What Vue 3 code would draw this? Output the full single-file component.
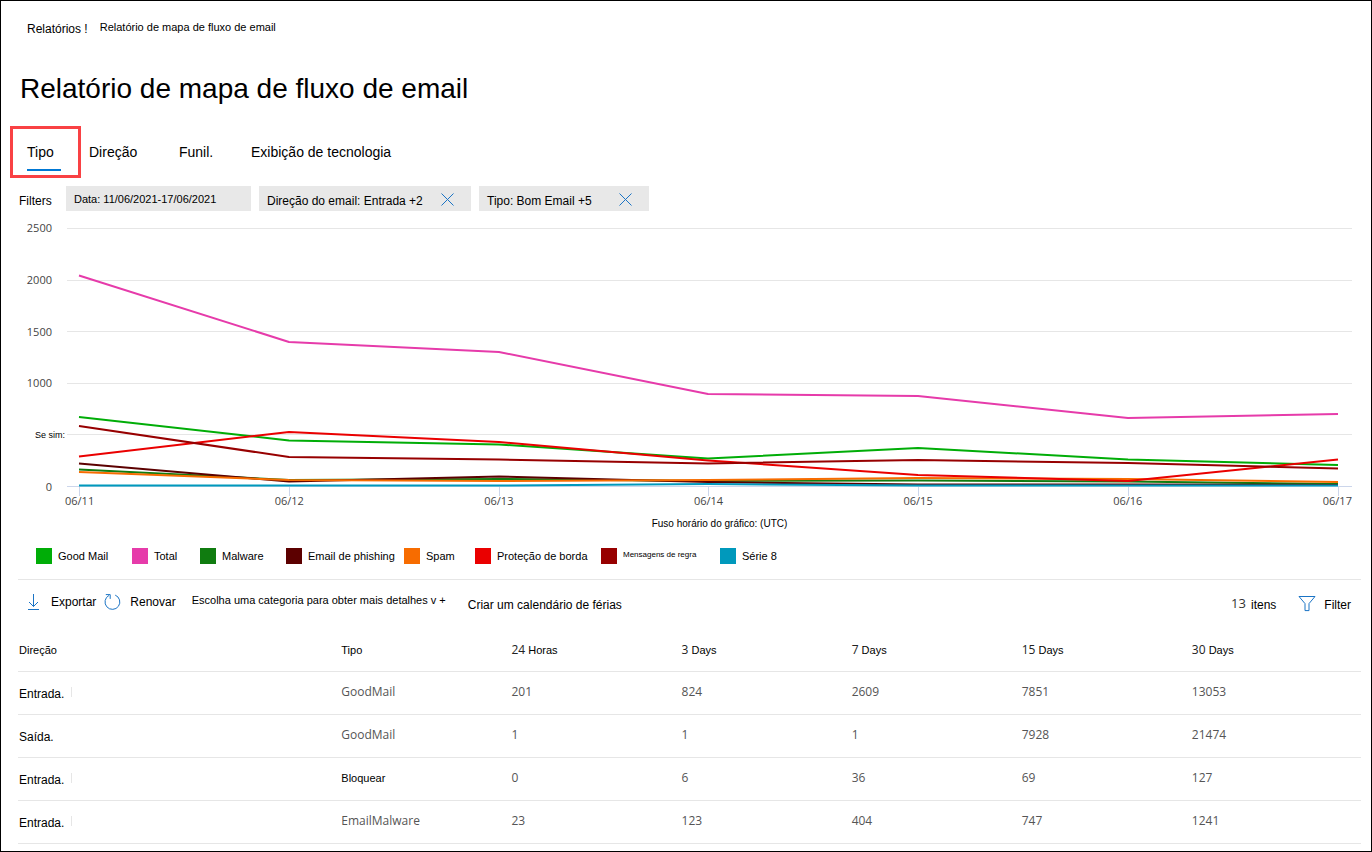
<script setup>
import { ref } from 'vue'

const tabs = ['Tipo', 'Direção', 'Funil.', 'Exibição de tecnologia']
const activeTab = ref('Tipo')

const yLabels = ['2500', '2000', '1500', '1000', 'Se sim:', '0']
const xLabels = ['06/11', '06/12', '06/13', '06/14', '06/15', '06/16', '06/17']

const series = [
  { name: 'Good Mail', color: '#00ad07', values: [673, 446, 407, 271, 373, 262, 208] },
  { name: 'Total', color: '#e63baa', values: [2045, 1400, 1303, 896, 877, 664, 703] },
  { name: 'Malware', color: '#107c10', values: [165, 63, 73, 53, 58, 48, 24] },
  { name: 'Email de phishing', color: '#5c0000', values: [223, 48, 97, 44, 19, 19, 15] },
  { name: 'Spam', color: '#f76c00', values: [141, 63, 53, 63, 82, 73, 44] },
  { name: 'Proteção de borda', color: '#ea0000', values: [291, 528, 431, 252, 111, 53, 262] },
  { name: 'Mensagens de regra', color: '#970000', small: true, values: [586, 286, 262, 223, 257, 228, 174] },
  { name: 'Série 8', color: '#0099bc', values: [10, 10, 10, 24, 10, 10, 10] }
]

const PLOT_WIDTH = 1285
const PLOT_HEIGHT = 258
const MAX_VALUE = 2500

const gridLines = [0, 1, 2, 3, 4].map((n) => Math.round((n * PLOT_HEIGHT) / 5) + 0.5)
const xAt = (i) => 12 + Math.round(i * 209.8)
const yAt = (v) => PLOT_HEIGHT + 0.5 - (v * PLOT_HEIGHT) / MAX_VALUE
const pointsOf = (s) => s.values.map((v, i) => `${xAt(i)},${yAt(v).toFixed(1)}`).join(' ')

const periods = [
  { count: 24, unit: 'Horas' },
  { count: 3, unit: 'Days' },
  { count: 7, unit: 'Days' },
  { count: 15, unit: 'Days' },
  { count: 30, unit: 'Days' }
]

const rows = [
  { direction: 'Entrada.', divider: true, type: 'GoodMail', counts: [201, 824, 2609, 7851, 13053] },
  { direction: 'Saída.', type: 'GoodMail', counts: [1, 1, 1, 7928, 21474] },
  { direction: 'Entrada.', divider: true, type: 'Bloquear', strong: true, counts: [0, 6, 36, 69, 127] },
  { direction: 'Entrada.', divider: true, type: 'EmailMalware', counts: [23, 123, 404, 747, 1241] }
]
</script>

<template>
  <main class="page">
    <nav class="breadcrumb" aria-label="Navegação">
      <a href="#" class="crumb">Relatórios !</a>
      <span class="crumb-current">Relatório de mapa de fluxo de email</span>
    </nav>

    <h1 class="title">Relatório de mapa de fluxo de email</h1>

    <div class="tabs" role="tablist">
      <button
        v-for="tab in tabs"
        :key="tab"
        type="button"
        role="tab"
        class="tab"
        :class="{ active: tab === activeTab }"
        :aria-selected="tab === activeTab"
        @click="activeTab = tab"
      >{{ tab }}</button>
    </div>

    <section class="filters">
      <span class="filters-label">Filters</span>
      <div class="chip"><span class="chip-small">Data: 11/06/2021-17/06/2021</span></div>
      <div class="chip">
        <span>Direção do email: Entrada +2</span>
        <button type="button" class="chip-close" aria-label="Remover filtro de direção">
          <svg width="13" height="13" viewBox="0 0 13 13"><path d="M.5 .5l12 12M12.5 .5l-12 12" /></svg>
        </button>
      </div>
      <div class="chip">
        <span>Tipo: Bom Email +5</span>
        <button type="button" class="chip-close" aria-label="Remover filtro de tipo">
          <svg width="13" height="13" viewBox="0 0 13 13"><path d="M.5 .5l12 12M12.5 .5l-12 12" /></svg>
        </button>
      </div>
    </section>

    <section class="chart">
      <div class="y-axis">
        <span v-for="label in yLabels" :key="label" :class="{ word: label === 'Se sim:' }">{{ label }}</span>
      </div>
      <div class="plot">
        <svg class="plot-svg" :viewBox="`0 0 ${PLOT_WIDTH} 268`" preserveAspectRatio="none" aria-hidden="true">
          <line v-for="y in gridLines" :key="y" class="grid-line" x1="0" :x2="PLOT_WIDTH" :y1="y" :y2="y" />
          <line class="axis-line" x1="0" :x2="PLOT_WIDTH" y1="258.5" y2="258.5" />
          <line v-for="(d, i) in xLabels" :key="d" class="axis-line" :x1="xAt(i) + 0.5" :x2="xAt(i) + 0.5" y1="258" y2="268" />
          <polyline v-for="s in series" :key="s.name" class="series" :points="pointsOf(s)" :stroke="s.color" />
        </svg>
        <div class="x-axis">
          <span v-for="d in xLabels" :key="d">{{ d }}</span>
        </div>
        <p class="timezone">Fuso horário do gráfico: (UTC)</p>
      </div>
    </section>

    <ul class="legend">
      <li v-for="s in series" :key="s.name">
        <span class="swatch" :style="{ background: s.color }"></span>
        <span :class="{ 'legend-small': s.small }">{{ s.name }}</span>
      </li>
    </ul>

    <div class="toolbar">
      <button type="button" class="tool export">
        <svg width="12" height="18" viewBox="0 0 12 18"><path d="M5.5 1v12.500M1 9l4.500 4.500L10 9M0 16.500h11" /></svg>
        <span>Exportar</span>
      </button>
      <button type="button" class="tool refresh">
        <svg width="17" height="18" viewBox="0 0 17 18">
          <path d="M11.2 2.1A7.4 7.4 0 1 1 5 2.4M1.8 1.6h4.4v4.3" />
        </svg>
        <span>Renovar</span>
      </button>
      <button type="button" class="tool category">Escolha uma categoria para obter mais detalhes v +</button>
      <button type="button" class="tool schedule">Criar um calendário de férias</button>
      <div class="toolbar-end">
        <span class="items"><span class="items-count">13</span> <span>itens</span></span>
        <button type="button" class="tool filter">
          <svg width="18" height="17" viewBox="0 0 18 17"><path d="M1 1.5h16L11 8.600v7H7v-7z" /></svg>
          <span>Filter</span>
        </button>
      </div>
    </div>

    <table class="table">
      <thead>
        <tr>
          <th class="first" scope="col">Direção</th>
          <th scope="col">Tipo</th>
          <th v-for="p in periods" :key="p.count" scope="col"><span class="count">{{ p.count }}</span> {{ p.unit }}</th>
        </tr>
      </thead>
      <tbody>
        <tr v-for="(row, i) in rows" :key="i">
          <td class="direction"><span :class="{ divided: row.divider }">{{ row.direction }}</span></td>
          <td :class="{ strong: row.strong }">{{ row.type }}</td>
          <td v-for="(c, j) in row.counts" :key="j">{{ c }}</td>
        </tr>
      </tbody>
    </table>
  </main>
</template>

<style>
body {
  background: #fff;
}
</style>

<style scoped>
.page {
  box-sizing: border-box;
  min-height: 100vh;
  padding: 18px 10px 7px 17px;
  border: 1px solid #000;
  background: #fff;
  color: #000;
  font: 12px/20px "Liberation Sans", Arial, sans-serif;
}

button {
  padding: 0;
  border: 0;
  background: none;
  color: inherit;
  font: inherit;
  text-align: left;
  white-space: nowrap;
  cursor: pointer;
}

svg {
  display: block;
  fill: none;
  stroke: #1b74c5;
}

.breadcrumb {
  display: flex;
  align-items: flex-start;
  gap: 12px;
  padding-left: 9px;
}

.crumb {
  color: inherit;
  text-decoration: none;
}

.crumb-current {
  font-size: 11px;
  line-height: 16px;
}

.title {
  margin: 32px 0 35px;
  padding-left: 2px;
  font-size: 28px;
  font-weight: 400;
  line-height: 36px;
}

.tabs {
  display: grid;
  grid-template-columns: 62px 90px 72px auto;
  justify-content: start;
  padding-left: 9px;
  font-size: 14px;
}

.tab {
  position: relative;
  justify-self: start;
  min-width: 34px;
  height: 29px;
  padding-bottom: 7px;
  border-bottom: 2px solid transparent;
}

.tab.active {
  border-color: #0078d4;
}

.tab.active::after {
  content: "";
  position: absolute;
  top: -16px;
  left: -17px;
  box-sizing: border-box;
  width: 71px;
  height: 52px;
  border: 3px solid #f94144;
}

.filters {
  display: grid;
  grid-template-columns: 40px 185px 212px 170px;
  gap: 8px;
  margin-top: 15px;
}

.filters-label {
  padding: 5px 0 0 1px;
}

.chip {
  display: flex;
  align-items: flex-start;
  justify-content: space-between;
  box-sizing: border-box;
  height: 25px;
  padding: 5px 17px 0 8px;
  background: #e8e8e8;
  white-space: nowrap;
}

.chip-small {
  font-size: 11px;
  line-height: 16px;
}

.chip-close {
  padding-top: 2px;
}

.chip-close path {
  stroke: #1b74c5;
}

.chart {
  display: grid;
  grid-template-columns: 49px 1fr;
  align-items: start;
  margin-top: 9px;
  padding-right: 9px;
}

.y-axis {
  display: flex;
  flex-direction: column;
  justify-content: space-between;
  align-items: flex-end;
  height: 275px;
}

.y-axis span {
  padding-right: 15px;
  color: #444;
  font: 11px/16px "Open Sans", "Noto Sans", sans-serif;
}

.y-axis .word {
  padding-right: 2px;
  color: #000;
  font: 9px/16px "Liberation Sans", Arial, sans-serif;
}

.plot {
  padding-top: 8px;
}

.plot-svg {
  width: 100%;
  height: 268px;
}

.grid-line {
  stroke: #e6e6e6;
  shape-rendering: crispEdges;
}

.axis-line {
  stroke: #ccd6eb;
  shape-rendering: crispEdges;
}

.series {
  stroke-width: 2;
  stroke-linejoin: round;
  vector-effect: non-scaling-stroke;
}

.x-axis {
  display: flex;
  justify-content: space-between;
  margin: -3px 0 0 -2px;
  color: #444;
  font: 11px/16px "Open Sans", "Noto Sans", sans-serif;
}

.timezone {
  margin: 7px 0 0;
  padding-left: 20px;
  font-size: 10px;
  line-height: 16px;
  text-align: center;
}

.legend {
  display: grid;
  grid-template-columns: 96px 68px 86px 118px 71px 126px 119px auto;
  justify-content: start;
  margin: 16px 0 0;
  padding: 0 0 15px 18px;
  border-bottom: 1px solid #e6e6e6;
  font-size: 11px;
  line-height: 16px;
  list-style: none;
  white-space: nowrap;
}

.legend li {
  display: flex;
  gap: 6px;
}

.swatch {
  width: 16px;
  height: 16px;
}

.legend-small {
  font-size: 8px;
  line-height: 14px;
}

.toolbar {
  display: flex;
  align-items: flex-start;
  height: 23px;
  padding: 12px 10px 14px;
}

.tool {
  display: flex;
}

.export {
  gap: 11px;
}

.export svg,
.refresh svg {
  padding-top: 1px;
}

.refresh {
  gap: 9px;
  margin-left: 8px;
}

.category {
  margin-left: 16px;
  font-size: 11px;
  line-height: 16px;
}

.schedule {
  align-self: flex-end;
  margin-left: 22px;
}

.toolbar-end {
  display: flex;
  align-items: flex-end;
  align-self: flex-end;
  gap: 22px;
  margin-left: auto;
}

.items {
  display: flex;
  align-items: flex-start;
  gap: 5px;
}

.items-count {
  color: #333;
  font: 13px/16px "Open Sans", "Noto Sans", sans-serif;
}

.filter {
  gap: 8px;
}

.table {
  width: 100%;
  border-collapse: separate;
  border-spacing: 0;
  table-layout: fixed;
}

.table th,
.table td {
  box-sizing: border-box;
  height: 43px;
  padding: 0 0 0 1px;
  border-bottom: 1px solid #e6e6e6;
  font-weight: 400;
  text-align: left;
  vertical-align: middle;
}

.table th {
  font-size: 11px;
}

.table .first {
  width: 24%;
}

.count {
  color: #222;
  font: 12px/20px "Open Sans", "Noto Sans", sans-serif;
}

.table td {
  padding-bottom: 2px;
  color: #555;
  font: 12px/20px "Open Sans", "Noto Sans", sans-serif;
}

.table .direction {
  padding-top: 2px;
  padding-bottom: 0;
  color: #000;
  font: 12px/20px "Liberation Sans", Arial, sans-serif;
}

.table .strong {
  color: #000;
  font: 11px/20px "Liberation Sans", Arial, sans-serif;
}

.divided {
  padding-right: 8px;
  background: linear-gradient(#e6e6e6, #e6e6e6) right top / 1px 10px no-repeat;
}
</style>
